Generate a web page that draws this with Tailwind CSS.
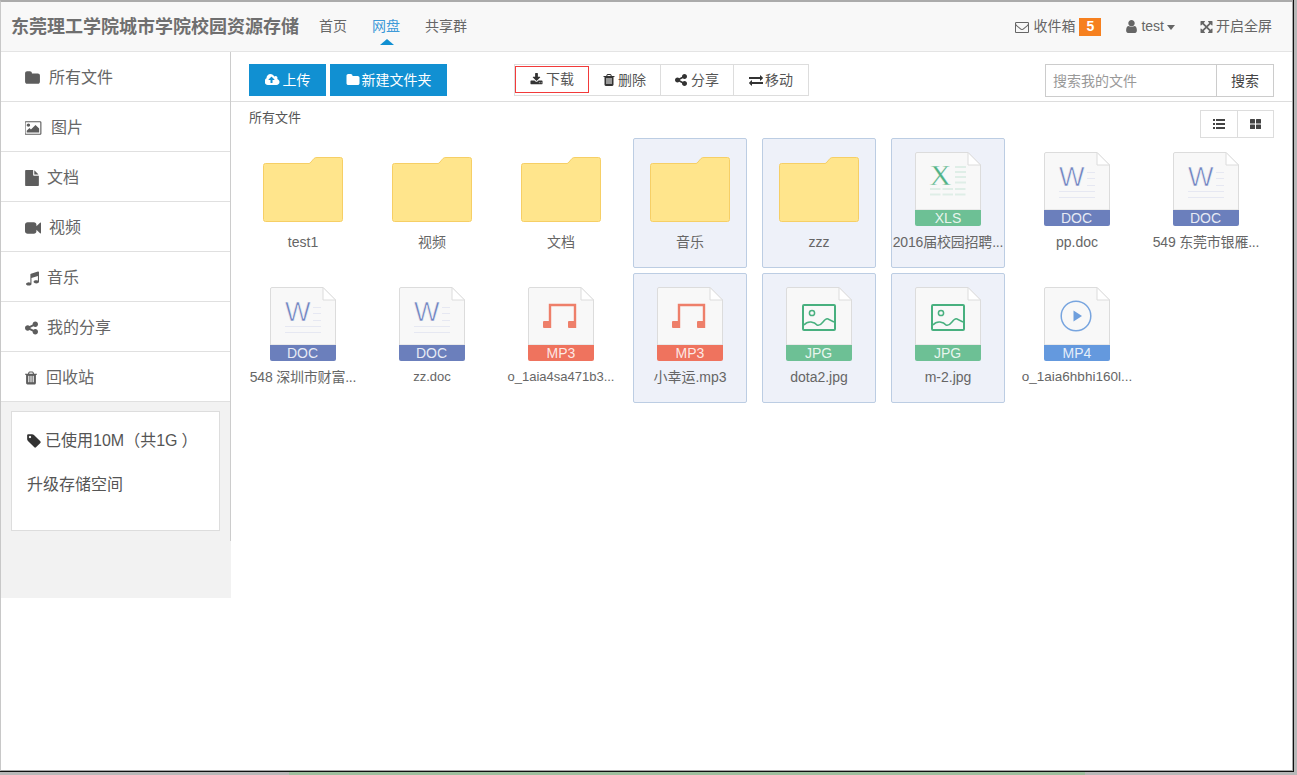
<!DOCTYPE html>
<html lang="zh">
<head>
<meta charset="utf-8">
<title>东莞理工学院城市学院校园资源存储</title>
<script src="https://cdn.jsdelivr.net/npm/@tailwindcss/browser@4"></script>
</head>
<body class="h-[775px] w-[1297px] overflow-hidden bg-[#b8b8b8] font-['Liberation_Sans','Noto_Sans_CJK_SC',sans-serif] text-[14px]">
<svg class="hidden" width="0" height="0">
<defs>
<path id="i-folder" d="M1728 608v704q0 92-66 158t-158 66h-1216q-92 0-158-66t-66-158v-960q0-92 66-158t158-66h320q92 0 158 66t66 158v32h672q92 0 158 66t66 158z"/>
<path id="i-picture" d="M576 576q0 80-56 136t-136 56-136-56-56-136 56-136 136-56 136 56 56 136zm1024 384v448h-1408v-192l320-320 160 160 512-512zm96-704h-1600q-13 0-22.500 9.500t-9.500 22.500v1216q0 13 9.500 22.500t22.500 9.500h1600q13 0 22.500-9.500t9.500-22.500v-1216q0-13-9.500-22.500t-22.500-9.500zm160 32v1216q0 66-47 113t-113 47h-1600q-66 0-113-47t-47-113v-1216q0-66 47-113t113-47h1600q66 0 113 47t47 113z"/>
<path id="i-file" d="M1024 512v-472q22 14 36 28l408 408q14 14 28 36h-472zm-128 32q0 40 28 68t68 28h544v1056q0 40-28 68t-68 28h-1344q-40 0-68-28t-28-68v-1600q0-40 28-68t68-28h800v544z"/>
<path id="i-video" d="M1792 352v1088q0 42-39 59-13 5-25 5-27 0-45-19l-403-403v166q0 119-84.500 203.500t-203.500 84.500h-704q-119 0-203.500-84.500t-84.500-203.500v-704q0-119 84.500-203.500t203.500-84.500h704q119 0 203.500 84.500t84.500 203.500v165l403-402q18-19 45-19 12 0 25 5 39 17 39 59z"/>
<path id="i-music" d="M1664 224v1120q0 50-34 89t-86 60.500-103.500 32-96.500 10.500-96.500-10.500-103.500-32-86-60.500-34-89 34-89 86-60.500 103.500-32 96.500-10.500q105 0 192 39v-537l-768 237v709q0 50-34 89t-86 60.500-103.500 32-96.500 10.500-96.500-10.500-103.500-32-86-60.500-34-89 34-89 86-60.500 103.500-32 96.500-10.500q105 0 192 39v-967q0-31 19-56.500t49-35.500l832-256q12-4 28-4 40 0 68 28t28 68z"/>
<path id="i-share" d="M1344 1024q133 0 226.500 93.500t93.500 226.500-93.500 226.500-226.500 93.500-226.500-93.500-93.500-226.500q0-12 2-34l-360-180q-92 86-218 86-133 0-226.500-93.500t-93.500-226.500 93.500-226.500 226.500-93.500q126 0 218 86l360-180q-2-22-2-34 0-133 93.500-226.500t226.500-93.500 226.500 93.500 93.500 226.500-93.500 226.500-226.500 93.500q-126 0-218-86l-360 180q2 22 2 34t-2 34l360 180q92-86 218-86z"/>
<path id="i-trash" d="M704 1376v-704q0-14-9-23t-23-9h-64q-14 0-23 9t-9 23v704q0 14 9 23t23 9h64q14 0 23-9t9-23zm256 0v-704q0-14-9-23t-23-9h-64q-14 0-23 9t-9 23v704q0 14 9 23t23 9h64q14 0 23-9t9-23zm256 0v-704q0-14-9-23t-23-9h-64q-14 0-23 9t-9 23v704q0 14 9 23t23 9h64q14 0 23-9t9-23zm-544-992h448l-48-117q-7-9-17-11h-317q-10 2-17 11zm928 32v64q0 14-9 23t-23 9h-96v948q0 83-47 143.500t-113 60.500h-832q-66 0-113-58.500t-47-141.500v-952h-96q-14 0-23-9t-9-23v-64q0-14 9-23t23-9h309l70-167q15-37 54-63t79-26h320q40 0 79 26t54 63l70 167h309q14 0 23 9t9 23z"/>
<path id="i-tag" d="M576 448q0-53-37.500-90.500t-90.500-37.500-90.500 37.500-37.500 90.500 37.500 90.500 90.500 37.500 90.500-37.500 37.500-90.500zm1067 576q0 53-37 90l-491 492q-39 37-91 37-53 0-90-37l-715-716q-38-37-64.500-101t-26.500-117v-416q0-52 38-90t90-38h416q53 0 117 26.500t102 64.500l715 714q37 39 37 91z"/>
<path id="i-user" d="M1536 1399q0 109-62.500 187t-150.500 78h-854q-88 0-150.500-78t-62.500-187q0-85 8.500-160.500t31.500-152 58.500-131 94-89 134.500-34.500q131 128 313 128t313-128q76 0 134.500 34.500t94 89 58.500 131 31.500 152 8.500 160.500zm-256-887q0 159-112.500 271.500t-271.500 112.500-271.500-112.500-112.500-271.500 112.500-271.500 271.500-112.500 271.500 112.500 112.500 271.500z"/>
<path id="i-env" d="M1664 1504v-768q-32 36-69 66-268 206-426 338-51 43-83 67t-86.500 48.500-102.500 24.500h-2q-48 0-102.500-24.500t-86.500-48.500-83-67q-158-132-426-338-37-30-69-66v768q0 13 9.500 22.500t22.500 9.500h1472q13 0 22.500-9.500t9.500-22.500zm0-1051v-24.500l-.5-13-3-12.500-5.500-9-9-7.500-14-2.500h-1472q-13 0-22.500 9.500t-9.500 22.500q0 168 147 284 193 152 401 317 6 5 35 29.500t46 37.500 44.500 31.500 50.500 27.500 43 9h2q20 0 43-9t50.500-27.500 44.500-31.500 46-37.500 35-29.500q208-165 401-317 54-43 100.500-115.500t46.500-131.500zm128-37v1088q0 66-47 113t-113 47h-1472q-66 0-113-47t-47-113v-1088q0-66 47-113t113-47h1472q66 0 113 47t47 113z"/>
<path id="i-down" d="M1344 1344q0-26-19-45t-45-19-45 19-19 45 19 45 45 19 45-19 19-45zm256 0q0-26-19-45t-45-19-45 19-19 45 19 45 45 19 45-19 19-45zm128-224v320q0 40-28 68t-68 28h-1472q-40 0-68-28t-28-68v-320q0-40 28-68t68-28h465l135 136q58 56 136 56t136-56l136-136h464q40 0 68 28t28 68zm-325-569q17 41-14 70l-448 448q-18 19-45 19t-45-19l-448-448q-31-29-14-70 17-39 59-39h256v-448q0-26 19-45t45-19h256q26 0 45 19t19 45v448h256q42 0 59 39z"/>
<path id="i-cloud" d="M1216 864q0-14-9-23l-352-352q-9-9-23-9t-23 9l-351 351q-10 12-10 24 0 14 9 23t23 9h224v352q0 13 9.500 22.500t22.500 9.500h192q13 0 22.500-9.500t9.500-22.500v-352h224q13 0 22.500-9.500t9.500-22.500zm640 288q0 159-112.500 271.500t-271.500 112.500h-1088q-185 0-316.500-131.500t-131.500-316.500q0-130 70-240t188-165q-2-30-2-43 0-212 150-362t362-150q156 0 285.500 87t188.500 231q71-62 166-62 106 0 181 75t75 181q0 76-41 138 130 31 213.500 135.500t83.500 238.500z"/>
<path id="i-ex" d="M1792 1184v192q0 13-9.500 22.500t-22.500 9.500h-1376v192q0 13-9.500 22.500t-22.500 9.500q-12 0-24-10l-319-320q-9-9-9-22 0-14 9-23l320-320q9-9 23-9 13 0 22.500 9.500t9.500 22.500v192h1376q13 0 22.500 9.500t9.500 22.500zm0-544q0 14-9 23l-320 320q-9 9-23 9-13 0-22.500-9.500t-9.500-22.500v-192h-1376q-13 0-22.500-9.500t-9.500-22.500v-192q0-13 9.500-22.500t22.500-9.500h1376v-192q0-14 9-23t23-9q12 0 24 10l319 319q9 9 9 23z"/>
<path id="i-arrows" d="M1411 541l-355 355 355 355 144-144q29-31 70-14 39 17 39 59v448q0 26-19 45t-45 19h-448q-42 0-59-40-17-39 14-69l144-144-355-355-355 355 144 144q31 30 14 69-17 40-59 40h-448q-26 0-45-19t-19-45v-448q0-42 40-59 39-17 69 14l144 144 355-355-355-355-144 144q-19 19-45 19-12 0-24-5-40-17-40-59v-448q0-26 19-45t45-19h448q42 0 59 40 17 39-14 69l-144 144 355 355 355-355-144-144q-31-30-14-69 17-40 59-40h448q26 0 45 19t19 45v448q0 42-39 59-13 5-25 5-26 0-45-19z"/>
<linearGradient id="fold-shade" x1="0" y1="0" x2="0" y2="1"><stop offset="0" stop-color="#e9e9e9"/><stop offset="1" stop-color="#f8f8f8"/></linearGradient>
<g id="sheet">
<path d="M2 .5H53L65.500 13V58H.5V2Q.5 .5 2 .5Z" fill="#f8f8f8" stroke="#dcdcdc"/>
<path d="M53 13H65V26Z" fill="url(#fold-shade)"/>
<path d="M53 .5V13H65.500Z" fill="#fff" stroke="#dcdcdc"/>
</g>
<path id="band" d="M0 58H66V72Q66 74 64 74H2Q0 74 0 72Z"/>
<g id="folder-shape"><path d="M2.500 6.500H46Q47 6.500 48 5L51 1.500Q52 .5 54 .5H77.500Q79.500 .5 79.500 2.500V62.500Q79.500 64.500 77.500 64.500H2.500Q.5 64.500 .5 62.500V8.500Q.5 6.500 2.500 6.500Z" fill="#ffe58c" stroke="#f6cf66"/></g>
<g id="doc-file">
<use href="#sheet"/>
<text x="15" y="34" font-size="27" fill="#6f83c0" stroke="#f8f8f8" stroke-width=".6">W</text>
<path d="M43 20.500H51M43 26.500H51M43 33.500H51M15 39.500H51M15 45.500H51" stroke="#e6e8f2" fill="none"/>
<use href="#band" fill="#6b7fbc"/>
<text x="32.500" y="71" font-size="14" text-anchor="middle" fill="#fff" fill-opacity=".85">DOC</text>
</g>
<g id="mp3-file">
<use href="#sheet"/>
<path d="M22 41V18H47V41" fill="none" stroke="#ee7f6a" stroke-width="2.400"/>
<rect x="15" y="34" width="8" height="7" rx="1" fill="#ee7f6a"/>
<rect x="40" y="34" width="8" height="7" rx="1" fill="#ee7f6a"/>
<use href="#band" fill="#ef735e"/>
<text x="33" y="71" font-size="14" text-anchor="middle" fill="#fff" fill-opacity=".85">MP3</text>
</g>
<g id="jpg-file">
<use href="#sheet"/>
<rect x="17" y="18" width="32" height="25" rx="1" fill="none" stroke="#48b07f" stroke-width="2"/>
<circle cx="26" cy="26" r="2.600" fill="none" stroke="#48b07f" stroke-width="1.500"/>
<path d="M18 38Q21 34.500 25 35T31 38Q34 39 37 35T42 32T48 35" fill="none" stroke="#48b07f" stroke-width="1.500"/>
<use href="#band" fill="#6dc095"/>
<text x="32.500" y="71" font-size="14" text-anchor="middle" fill="#fff" fill-opacity=".85">JPG</text>
</g>
</defs>
</svg>

<div class="flex h-[772px] w-[1294px] border-r border-b border-[#111]">
<div class="flex h-full w-full flex-col border-t-2 border-r border-b border-l border-t-[#ababab] border-r-[#a8a8a8] border-b-[#a8a8a8] border-l-[#c8c8c8] bg-white">

<header class="flex h-[50px] shrink-0 items-center border-b border-[#e4e4e4] bg-[#f8f8f8] pr-[20px] pl-[10px] text-[#666]">
<span class="pt-[1px] text-[18px] font-bold text-[#6f6f6f]">东莞理工学院城市学院校园资源存储</span>
<nav class="ml-[20px] flex gap-[25px]">
<span>首页</span>
<span class="relative text-[#3f9ad8]">网盘<span class="absolute top-[23px] left-[8px] h-0 w-0 border-x-[7px] border-b-[6px] border-x-transparent border-b-[#1190d2]"></span></span>
<span>共享群</span>
</nav>
<div class="ml-auto flex items-center">
<svg class="mr-[4px] h-[14px] w-[14px] fill-[#666]" viewBox="0 0 1792 1792"><use href="#i-env"/></svg>
<span>收件箱</span>
<span class="ml-[4px] flex h-[18px] w-[22px] items-center justify-center bg-[#f6801f] font-bold text-white">5</span>
<svg class="mr-[4px] ml-[25px] h-[15px] w-[11px] fill-[#666]" viewBox="256 0 1280 1792"><use href="#i-user"/></svg>
<span>test</span>
<span class="mt-[1px] ml-[3px] h-0 w-0 border-x-[4px] border-t-[5px] border-x-transparent border-t-[#666]"></span>
<svg class="mr-[3px] ml-[25px] h-[14px] w-[13px] fill-[#666]" viewBox="128 0 1536 1792"><use href="#i-arrows"/></svg>
<span>开启全屏</span>
</div>
</header>

<div class="flex min-h-0 flex-1">
<aside class="h-[546px] w-[230px] shrink-0 bg-[#f2f2f2]">
<div class="h-[489px] w-[230px] border-r border-[#ccc]">
<div class="flex h-[50px] items-center border-b border-[#e0e0e0] bg-white pt-[2px] pl-[24px] text-[16px] text-[#666]"><svg class="mr-[9px] h-[16px] w-[15px] fill-[#5d5d5d]" viewBox="64 0 1664 1792"><use href="#i-folder"/></svg>所有文件</div>
<div class="flex h-[50px] items-center border-b border-[#e0e0e0] bg-white pt-[2px] pl-[24px] text-[16px] text-[#666]"><svg class="mr-[9px] h-[16px] w-[17px] fill-[#5d5d5d]" viewBox="0 0 1920 1792"><use href="#i-picture"/></svg>图片</div>
<div class="flex h-[50px] items-center border-b border-[#e0e0e0] bg-white pt-[2px] pl-[24px] text-[16px] text-[#666]"><svg class="mr-[8px] h-[16px] w-[14px] fill-[#5d5d5d]" viewBox="0 0 1536 1792"><use href="#i-file"/></svg>文档</div>
<div class="flex h-[50px] items-center border-b border-[#e0e0e0] bg-white pt-[2px] pl-[24px] text-[16px] text-[#666]"><svg class="mr-[8px] h-[16px] w-[16px] fill-[#5d5d5d]" viewBox="0 0 1792 1792"><use href="#i-video"/></svg>视频</div>
<div class="flex h-[50px] items-center border-b border-[#e0e0e0] bg-white pt-[2px] pl-[24px] text-[16px] text-[#666]"><svg class="mr-[8px] h-[16px] w-[14px] fill-[#5d5d5d]" viewBox="0 0 1664 1792"><use href="#i-music"/></svg>音乐</div>
<div class="flex h-[50px] items-center border-b border-[#e0e0e0] bg-white pt-[2px] pl-[24px] text-[16px] text-[#666]"><svg class="mr-[9px] h-[16px] w-[13px] fill-[#5d5d5d]" viewBox="128 0 1536 1792"><use href="#i-share"/></svg>我的分享</div>
<div class="flex h-[50px] items-center border-b border-[#e0e0e0] bg-white pt-[2px] pl-[24px] text-[16px] text-[#666]"><svg class="mr-[9px] h-[16px] w-[12px] fill-[#5d5d5d]" viewBox="192 0 1408 1792"><use href="#i-trash"/></svg>回收站</div>
<div class="pt-[9px] pl-[10px]">
<div class="h-[120px] w-[209px] border border-[#ddd] bg-white pt-[17px] pl-[15px] text-[#555]">
<div class="flex h-[24px] items-center text-[16px]"><svg class="mr-[4px] h-[16px] w-[14px] fill-[#333]" viewBox="128 0 1536 1792"><use href="#i-tag"/></svg><span>已使用10M（共1G<span class="inline-block translate-x-[4px]">）</span></span></div>
<div class="mt-[20px] text-[16px]">升级存储空间</div>
</div>
</div>
</div>
</aside>

<main class="min-w-0 flex-1">
<div class="flex h-[50px] items-start border-b border-[#ddd] pt-[12px] pr-[18px] pl-[18px]">
<button class="flex h-[32px] w-[77px] items-center justify-center bg-[#1190d2] text-white"><svg class="mr-[3px] h-[14px] w-[15px] fill-white" viewBox="0 0 1920 1792"><use href="#i-cloud"/></svg>上传</button>
<button class="ml-[4px] flex h-[32px] w-[117px] items-center justify-center bg-[#1190d2] text-white"><svg class="mr-[2px] h-[14px] w-[14px] fill-white" viewBox="64 0 1664 1792"><use href="#i-folder"/></svg>新建文件夹</button>
<div class="ml-[67px] flex h-[32px] w-[295px] border border-[#ddd] text-[#555]">
<button class="mt-[1px] h-[27px] w-[74px] border border-[#f23a3a]"><span class="flex items-center justify-center"><svg class="mr-[3px] h-[13px] w-[13px] fill-[#333]" viewBox="64 0 1664 1792"><use href="#i-down"/></svg>下载</span></button>
<button class="flex w-[72px] items-center justify-center border-r border-[#ddd]"><svg class="mr-[3px] h-[14px] w-[12px] fill-[#333]" viewBox="192 0 1408 1792"><use href="#i-trash"/></svg>删除</button>
<button class="flex w-[73px] items-center justify-center border-r border-[#ddd]"><svg class="mr-[4px] h-[14px] w-[12px] fill-[#333]" viewBox="128 0 1536 1792"><use href="#i-share"/></svg>分享</button>
<button class="flex flex-1 items-center justify-center"><svg class="mr-[2px] h-[14px] w-[14px] fill-[#333]" viewBox="0 0 1792 1792"><use href="#i-ex"/></svg>移动</button>
</div>
<div class="ml-auto flex h-[33px] w-[229px] border border-[#ccc]">
<span class="flex w-[171px] items-center border-r border-[#ccc] pt-[1px] pl-[7px] text-[#999]">搜索我的文件</span>
<button class="flex-1 pt-[1px] text-[#444]">搜索</button>
</div>
</div>

<div class="flex h-[36px] items-start justify-between pt-[8px] pr-[18px] pl-[18px]">
<span class="text-[13px] leading-[16px] text-[#555]">所有文件</span>
<div class="flex h-[28px] w-[74px] border border-[#ddd]">
<span class="flex w-[37px] items-center justify-center border-r border-[#ddd]"><svg class="h-[10px] w-[12px] fill-[#444]" viewBox="0 0 12 10"><rect width="2" height="2"/><rect y="4" width="2" height="2"/><rect y="8" width="2" height="2"/><rect x="3" width="9" height="2"/><rect x="3" y="4" width="9" height="2"/><rect x="3" y="8" width="9" height="2"/></svg></span>
<span class="flex flex-1 items-center justify-center"><svg class="h-[10px] w-[11px] fill-[#444]" viewBox="0 0 11 10"><rect width="5" height="4.500" rx=".5"/><rect x="6" width="5" height="4.500" rx=".5"/><rect y="5.500" width="5" height="4.500" rx=".5"/><rect x="6" y="5.500" width="5" height="4.500" rx=".5"/></svg></span>
</div>
</div>

<div class="grid grid-cols-[repeat(8,114px)] gap-x-[15px] gap-y-[5px] pl-[15px] text-center text-[14px] leading-[20px] whitespace-nowrap text-[#666]">
<div class="flex h-[130px] flex-col items-center border border-transparent"><svg class="mt-[18px] mb-[10px] h-[65px] w-[80px]" viewBox="0 0 80 65"><use href="#folder-shape"/></svg><span>test1</span></div>
<div class="flex h-[130px] flex-col items-center border border-transparent"><svg class="mt-[18px] mb-[10px] h-[65px] w-[80px]" viewBox="0 0 80 65"><use href="#folder-shape"/></svg><span>视频</span></div>
<div class="flex h-[130px] flex-col items-center border border-transparent"><svg class="mt-[18px] mb-[10px] h-[65px] w-[80px]" viewBox="0 0 80 65"><use href="#folder-shape"/></svg><span>文档</span></div>
<div class="flex h-[130px] flex-col items-center rounded-[2px] border border-[#bccde3] bg-[#eef1f9]"><svg class="mt-[18px] mb-[10px] h-[65px] w-[80px]" viewBox="0 0 80 65"><use href="#folder-shape"/></svg><span>音乐</span></div>
<div class="flex h-[130px] flex-col items-center rounded-[2px] border border-[#bccde3] bg-[#eef1f9]"><svg class="mt-[18px] mb-[10px] h-[65px] w-[80px]" viewBox="0 0 80 65"><use href="#folder-shape"/></svg><span>zzz</span></div>
<div class="flex h-[130px] flex-col items-center rounded-[2px] border border-[#bccde3] bg-[#eef1f9]">
<svg class="mt-[13px] mb-[6px] h-[74px] w-[66px]" viewBox="0 0 66 74"><use href="#sheet"/>
<path d="M40 15H51M40 20H51M40 25H51M40 30.500H51" stroke="#dfeee7" stroke-width="2" fill="none"/>
<path d="M15 37H51M15 42.500H51" stroke="#dfeee7" stroke-width="2" stroke-dasharray="10.500 2" fill="none"/>
<text x="14.500" y="33" font-size="30" fill="#4fb285" font-family="Liberation Serif" stroke="#f8f8f8" stroke-width=".3">X</text>
<use href="#band" fill="#6dc095"/><text x="33" y="71" font-size="14" text-anchor="middle" fill="#fff" fill-opacity=".85">XLS</text></svg>
<span class="tracking-[-0.2px]">2016届校园招聘...</span></div>
<div class="flex h-[130px] flex-col items-center border border-transparent"><svg class="mt-[13px] mb-[6px] h-[74px] w-[66px]" viewBox="0 0 66 74"><use href="#doc-file"/></svg><span>pp.doc</span></div>
<div class="flex h-[130px] flex-col items-center border border-transparent"><svg class="mt-[13px] mb-[6px] h-[74px] w-[66px]" viewBox="0 0 66 74"><use href="#doc-file"/></svg><span class="tracking-[-0.2px]">549 东莞市银雁...</span></div>
<div class="flex h-[130px] flex-col items-center border border-transparent"><svg class="mt-[13px] mb-[6px] h-[74px] w-[66px]" viewBox="0 0 66 74"><use href="#doc-file"/></svg><span class="tracking-[-0.2px]">548 深圳市财富...</span></div>
<div class="flex h-[130px] flex-col items-center border border-transparent"><svg class="mt-[13px] mb-[6px] h-[74px] w-[66px]" viewBox="0 0 66 74"><use href="#doc-file"/></svg><span class="text-[13px]">zz.doc</span></div>
<div class="flex h-[130px] flex-col items-center border border-transparent"><svg class="mt-[13px] mb-[6px] h-[74px] w-[66px]" viewBox="0 0 66 74"><use href="#mp3-file"/></svg><span class="text-[13px]">o_1aia4sa471b3...</span></div>
<div class="flex h-[130px] flex-col items-center rounded-[2px] border border-[#bccde3] bg-[#eef1f9]"><svg class="mt-[13px] mb-[6px] h-[74px] w-[66px]" viewBox="0 0 66 74"><use href="#mp3-file"/></svg><span>小幸运.mp3</span></div>
<div class="flex h-[130px] flex-col items-center rounded-[2px] border border-[#bccde3] bg-[#eef1f9]"><svg class="mt-[13px] mb-[6px] h-[74px] w-[66px]" viewBox="0 0 66 74"><use href="#jpg-file"/></svg><span>dota2.jpg</span></div>
<div class="flex h-[130px] flex-col items-center rounded-[2px] border border-[#bccde3] bg-[#eef1f9]"><svg class="mt-[13px] mb-[6px] h-[74px] w-[66px]" viewBox="0 0 66 74"><use href="#jpg-file"/></svg><span>m-2.jpg</span></div>
<div class="flex h-[130px] flex-col items-center border border-transparent">
<svg class="mt-[13px] mb-[6px] h-[74px] w-[66px]" viewBox="0 0 66 74"><use href="#sheet"/>
<circle cx="32" cy="29" r="14.800" fill="none" stroke="#78a5df" stroke-width="1.500"/>
<path d="M29.500 23.500V34.500L38 29Z" fill="#6f9fdd"/>
<use href="#band" fill="#6499de"/><text x="33" y="71" font-size="14" text-anchor="middle" fill="#fff" fill-opacity=".85">MP4</text></svg>
<span class="text-[13.5px]">o_1aia6hbhi160l...</span></div>
</div>
</main>
</div>
</div>
</div>
<div class="flex h-[3px]"><div class="w-[289px]"></div><div class="w-[796px] bg-[#9dbf9e]"></div></div>
</body>
</html>
